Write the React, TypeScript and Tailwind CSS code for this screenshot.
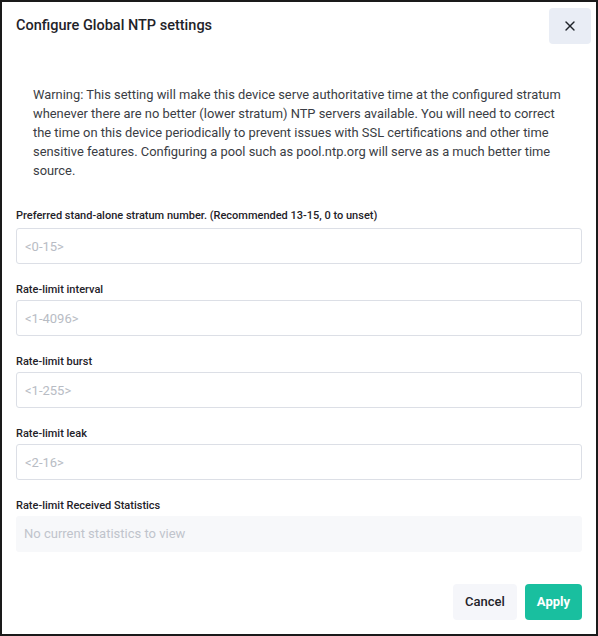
import { X } from "lucide-react";

const fields = [
  { label: "Preferred stand-alone stratum number. (Recommended 13-15, 0 to unset)", placeholder: "<0-15>" },
  { label: "Rate-limit interval", placeholder: "<1-4096>" },
  { label: "Rate-limit burst", placeholder: "<1-255>" },
  { label: "Rate-limit leak", placeholder: "<2-16>" },
];

export default function App() {
  return (
    <div
      className="w-[598px] h-[636px] bg-white border-2 border-[#1a1a1a] flex flex-col text-[#1f2329]"
      style={{ fontFamily: "Roboto, 'Liberation Sans', sans-serif" }}
    >
      <div className="flex items-start justify-between pl-[14px] pr-[5px] pt-[6px]">
        <h1 className="text-[14.5px] font-medium mt-[7px] text-[#1f2329]">Configure Global NTP settings</h1>
        <button className="w-[42px] h-[36px] rounded-[4px] bg-[#e9edf5] flex items-center justify-center text-[#1f2329]">
          <X size={16} strokeWidth={2} />
        </button>
      </div>

      <p className="mt-[41px] pl-[31px] pr-[20px] text-[12.9px] leading-[19px] text-[#3a3d44]">
        Warning: This setting will make this device serve authoritative time at the configured stratum whenever there are no
        better (lower stratum) NTP servers available. You will need to correct the time on this device periodically to prevent
        issues with SSL certifications and other time sensitive features. Configuring a pool such as pool.ntp.org will serve as
        a much better time source.
      </p>

      <div className="px-[14px] mt-[29px] flex flex-col gap-[19px]">
        {fields.map((f, i) => (
          <div key={f.label} className={`flex flex-col ${i === 0 ? "gap-[6px]" : "gap-[4px]"}`}>
            <label className="text-[11px] leading-[13px] font-medium text-[#1f2329]">{f.label}</label>
            <input
              type="text"
              placeholder={f.placeholder}
              className="h-[36px] w-full rounded-[3px] border border-[#dcdfe6] px-[8px] text-[13px] placeholder:text-[#b8bcc4] outline-none"
            />
          </div>
        ))}
        <div className="flex flex-col gap-[4px]">
          <label className="text-[11px] leading-[13px] font-medium text-[#1f2329]">Rate-limit Received Statistics</label>
          <div className="h-[36px] w-full rounded-[3px] bg-[#f7f8fa] px-[8px] flex items-center text-[13px] text-[#c0c4cc]">
            No current statistics to view
          </div>
        </div>
      </div>

      <div className="mt-auto mb-[14px] flex justify-end gap-[8px] pr-[14px]">
        <button className="h-[36px] px-[12px] rounded-[4px] bg-[#f5f6fa] text-[13px] font-medium text-[#1f2329]">Cancel</button>
        <button className="h-[36px] px-[12px] rounded-[4px] bg-[#19bf9f] text-[13px] font-bold text-white">Apply</button>
      </div>
    </div>
  );
}
